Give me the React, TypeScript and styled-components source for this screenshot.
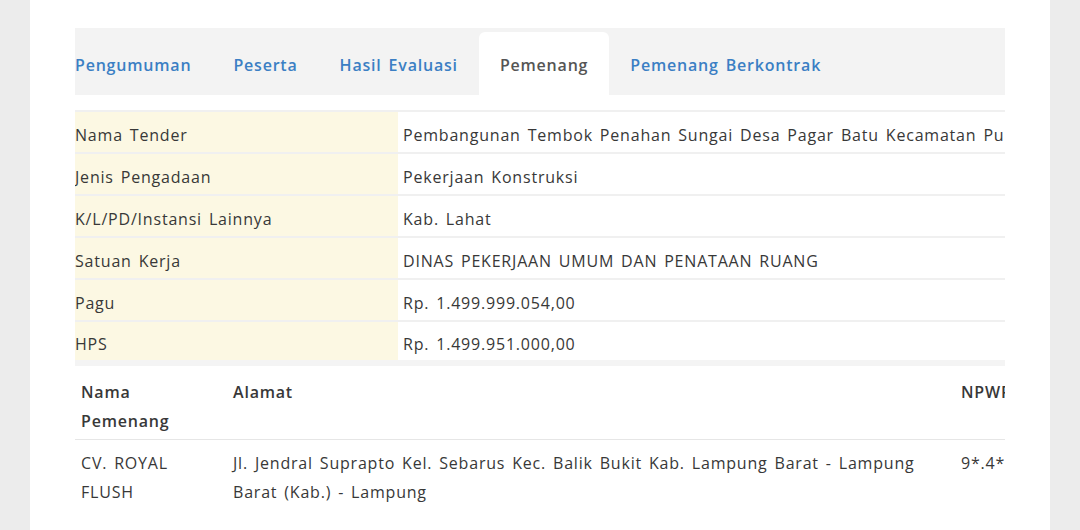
import React from 'react';
import styled, {createGlobalStyle} from 'styled-components';

const GlobalStyle = createGlobalStyle`
  body {
    margin: 0;
    background: #ececec;
    font-family: 'Open Sans', 'Liberation Sans', sans-serif;
    letter-spacing: 0.8px;
    word-spacing: 2px;
  }
`

const Page = styled.div`
  width: 1080px;
  height: 530px;
  display: flex;
  justify-content: center;
  overflow: hidden;
`

const Panel = styled.div`
  width: 1020px;
  background: #ffffff;
  padding: 28px 45px 0;
  box-sizing: border-box;
`

const Scroller = styled.div`
  width: 930px;
  overflow: hidden;
`

const TabBar = styled.ul`
  display: flex;
  align-items: flex-end;
  height: 67px;
  margin: 0 0 15px;
  padding: 0;
  list-style: none;
  background: #f3f3f3;
`

const Tab = styled.li<{$active?: boolean}>`
  display: flex;
  align-items: center;
  height: 63px;
  padding: 2px 21px 0;
  box-sizing: border-box;
  border-radius: 6px 6px 0 0;
  background: ${p => (p.$active ? '#ffffff' : 'transparent')};
  color: ${p => (p.$active ? '#555555' : '#3b7fc4')};
  font-size: 16px;
  font-weight: 600;
  white-space: nowrap;

  &:first-child {
    padding-left: 0;
  }
`

const InfoTable = styled.table`
  width: 1200px;
  border-collapse: collapse;
  border-top: 2px solid #f0f0f0;
  border-bottom: 6px solid #f4f4f4;
  font-size: 16px;
  color: #383838;
`

const InfoRow = styled.tr`
  height: 42px;
  border-bottom: 2px solid #f0f0f0;

  &:last-child {
    border-bottom: none;
  }
`

const Label = styled.td`
  width: 323px;
  padding: 6px 0 0;
  background: #fcf8e3;
  white-space: nowrap;
`

const Value = styled.td`
  padding: 6px 0 0 5px;
  white-space: nowrap;
`

const WinnerTable = styled.table`
  width: 1100px;
  margin-top: 1px;
  border-collapse: collapse;
  font-size: 16px;
  line-height: 29px;
  color: #383838;
  table-layout: fixed;
`

const HeadCell = styled.th<{$w: number}>`
  width: ${p => p.$w}px;
  padding: 11px 6px 3px;
  text-align: left;
  vertical-align: top;
  font-weight: 600;
  border-bottom: 1px solid #e6e6e6;
`

const Cell = styled.td`
  padding: 9px 6px 6px;
  vertical-align: top;
`

const tabs = ['Pengumuman', 'Peserta', 'Hasil Evaluasi', 'Pemenang', 'Pemenang Berkontrak'];

const info: [string, string][] = [
  ['Nama Tender', 'Pembangunan Tembok Penahan Sungai Desa Pagar Batu Kecamatan Pulau Pinang'],
  ['Jenis Pengadaan', 'Pekerjaan Konstruksi'],
  ['K/L/PD/Instansi Lainnya', 'Kab. Lahat'],
  ['Satuan Kerja', 'DINAS PEKERJAAN UMUM DAN PENATAAN RUANG'],
  ['Pagu', 'Rp. 1.499.999.054,00'],
  ['HPS', 'Rp. 1.499.951.000,00'],
];

export default function App() {
  return (
    <Page>
      <GlobalStyle />
      <Panel>
        <Scroller>
          <TabBar>
            {tabs.map(t => (
              <Tab key={t} $active={t === 'Pemenang'}>{t}</Tab>
            ))}
          </TabBar>

          <InfoTable>
            <tbody>
              {info.map(([k, v]) => (
                <InfoRow key={k}>
                  <Label>{k}</Label>
                  <Value>{v}</Value>
                </InfoRow>
              ))}
            </tbody>
          </InfoTable>

          <WinnerTable>
            <thead>
              <tr>
                <HeadCell $w={140}>Nama Pemenang</HeadCell>
                <HeadCell $w={716}>Alamat</HeadCell>
                <HeadCell $w={220}>NPWP</HeadCell>
              </tr>
            </thead>
            <tbody>
              <tr>
                <Cell>CV. ROYAL FLUSH</Cell>
                <Cell>Jl. Jendral Suprapto Kel. Sebarus Kec. Balik Bukit Kab. Lampung Barat - Lampung Barat (Kab.) - Lampung</Cell>
                <Cell>9*.4**.***.*-***.000</Cell>
              </tr>
            </tbody>
          </WinnerTable>
        </Scroller>
      </Panel>
    </Page>
  )
}
